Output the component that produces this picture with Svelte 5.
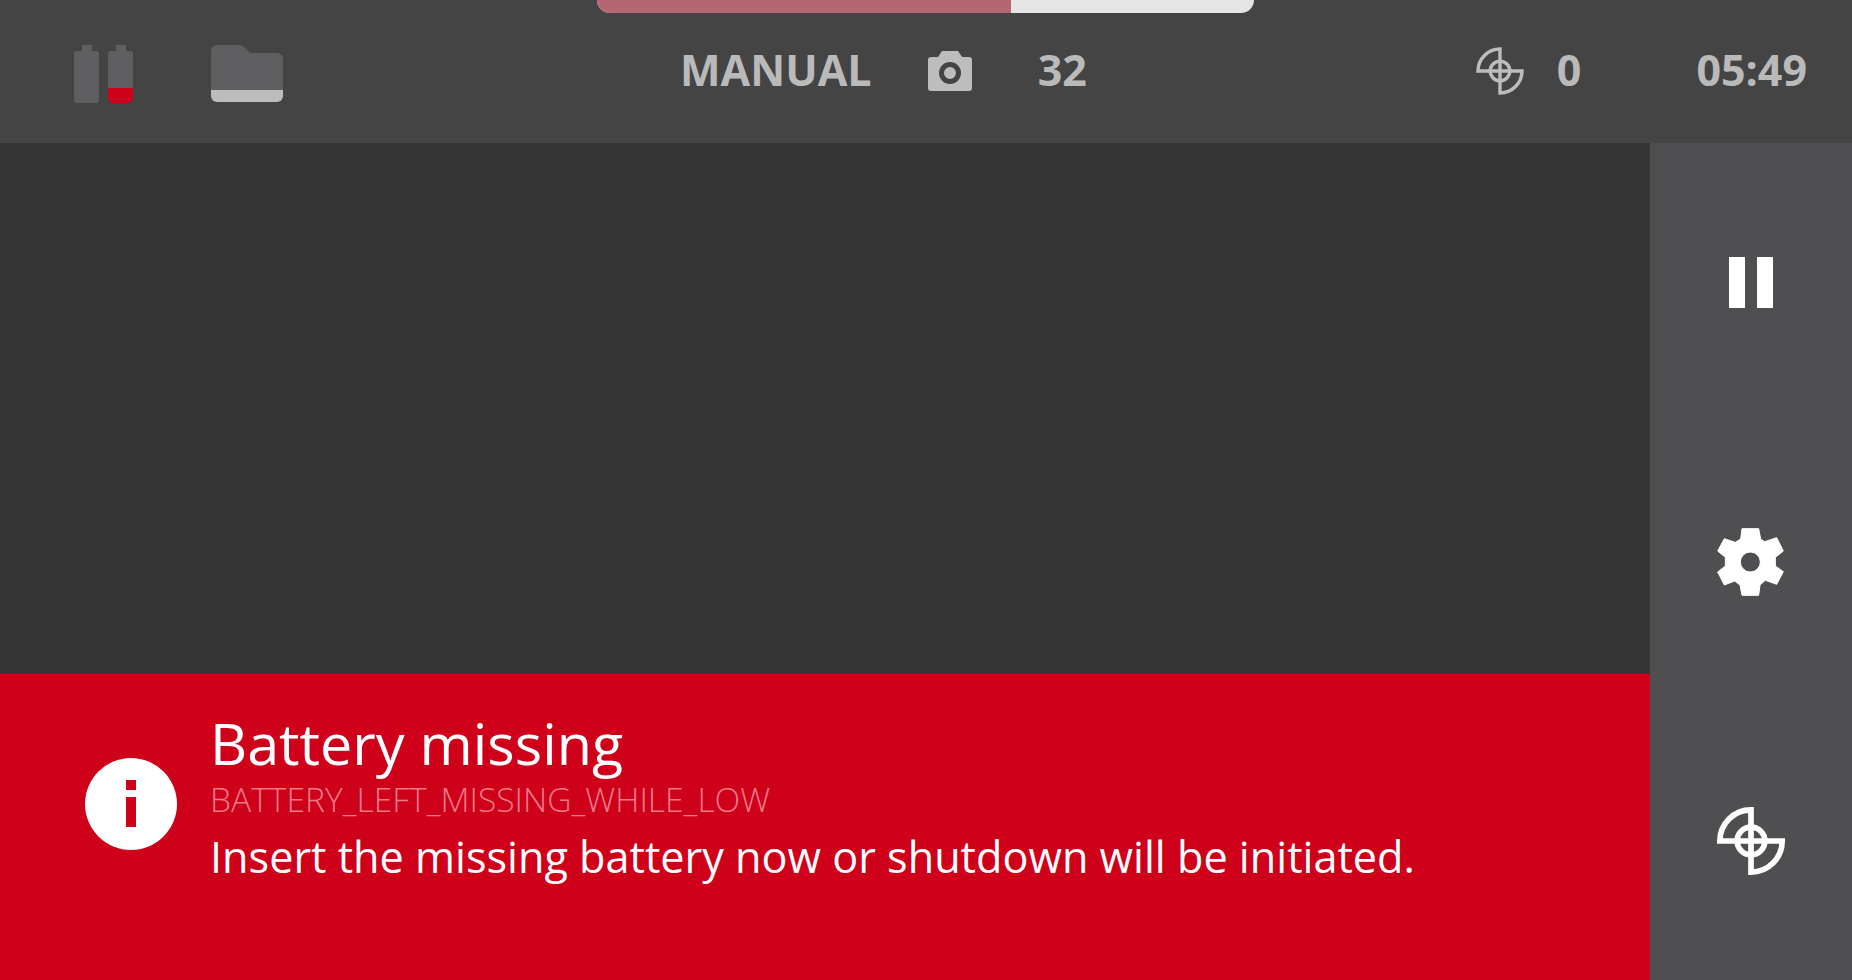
<script>
	let mode = "MANUAL";
	let shots = 32;
	let marks = 0;
	let time = "05:49";
	let progress = 63;
</script>

<div class="screen">
	<div class="progress">
		<div class="progress__fill" style="width: {progress}%"></div>
	</div>

	<header class="topbar">
		<div class="batteries">
			<svg width="25" height="58" viewBox="0 0 25 58">
				<path class="cell" d="M8 0h10v6h4a3 3 0 0 1 3 3v46a3 3 0 0 1-3 3H3a3 3 0 0 1-3-3V9a3 3 0 0 1 3-3h5z" />
			</svg>
			<svg width="25" height="58" viewBox="0 0 25 58">
				<path class="cell" d="M8 0h10v6h4a3 3 0 0 1 3 3v34H0V9a3 3 0 0 1 3-3h5z" />
				<path class="low" d="M0 43h25v10a5 5 0 0 1-5 5H5a5 5 0 0 1-5-5z" />
			</svg>
		</div>
		<svg class="folder" width="72" height="57" viewBox="0 0 72 57">
			<path class="cell" d="M6 0h22q3 0 5 2l5 5q1 1 3 1h25a6 6 0 0 1 6 6v31H0V6a6 6 0 0 1 6-6z" />
			<path class="strip" d="M0 45h72v6a6 6 0 0 1-6 6H6a6 6 0 0 1-6-6z" />
		</svg>
		<span class="mode">{mode}</span>
		<svg class="camera" width="44" height="40" viewBox="0 0 44 40">
			<path class="strip" fill-rule="evenodd" d="M14 0h16l4 6h7a3 3 0 0 1 3 3v28a3 3 0 0 1-3 3H3a3 3 0 0 1-3-3V9a3 3 0 0 1 3-3h7zM22 11a11 11 0 1 0 0 22a11 11 0 1 0 0-22zM22 16a6 6 0 1 1 0 12a6 6 0 1 1 0-12z" />
		</svg>
		<span class="count">{shots}</span>
		<svg class="target" width="48" height="48" viewBox="0 0 24 24">
			<path d="M1 12A11 11 0 0 1 12 1V23A11 11 0 0 0 23 12H1z" />
			<circle cx="12" cy="12" r="4.9" />
		</svg>
		<span class="marks">{marks}</span>
		<span class="time">{time}</span>
	</header>

	<div class="body">
		<main class="main">
			<div class="view"></div>
			<section class="alert">
				<svg class="info" width="92" height="92" viewBox="0 0 92 92">
					<circle cx="46" cy="46" r="46" fill="#fff" />
					<path d="M41 22h10v10H41zM41 39h10v30H41z" fill="#cf0019" />
				</svg>
				<div class="alert__text">
					<h1>Battery missing</h1>
					<div class="code">BATTERY_LEFT_MISSING_WHILE_LOW</div>
					<p>Insert the missing battery now or shutdown will be initiated.</p>
				</div>
			</section>
		</main>

		<aside class="side">
			<div class="side__cell">
				<svg width="44" height="51" viewBox="0 0 44 51">
					<path d="M0 0h16v51H0zM28 0h16v51H28z" fill="#fff" />
				</svg>
			</div>
			<div class="side__cell">
				<svg width="68" height="70" viewBox="53 53 204 204">
					<path fill="#fff" stroke="#fff" stroke-width="3" stroke-linejoin="round" fill-rule="evenodd" d="M128 55H178L184 86L196 94L232 82L252 122L228 141V167L252 184L232 222L198 210L182 224L178 255H128L122 224L106 212L75 224L55 185L78 167V141L55 122L75 85L108 96L124 86zM153 125a30 30 0 1 0 0 60a30 30 0 1 0 0-60z" />
				</svg>
			</div>
			<div class="side__cell">
				<svg class="target target--big" width="68" height="68" viewBox="0 0 24 24">
					<path d="M1 12A11 11 0 0 1 12 1V23A11 11 0 0 0 23 12H1z" />
					<circle cx="12" cy="12" r="4.9" />
				</svg>
			</div>
		</aside>
	</div>
</div>

<style>
	:global(body) {
		margin: 0;
	}

	.screen {
		position: relative;
		width: 1852px;
		height: 980px;
		overflow: hidden;
		display: flex;
		flex-direction: column;
		font-family: "Open Sans", "Liberation Sans", sans-serif;
		background: #353536;
	}

	.progress {
		position: absolute;
		top: 0;
		left: 597px;
		width: 657px;
		height: 13px;
		background: #e5e5e5;
		border-radius: 0 0 13px 13px;
		overflow: hidden;
	}

	.progress__fill {
		height: 100%;
		background: #b56673;
	}

	.topbar {
		height: 143px;
		flex: none;
		display: flex;
		align-items: center;
		padding-left: 74px;
		background: #444444;
		color: #bababa;
		font-weight: 700;
		font-size: 43px;
		line-height: 1;
	}

	.topbar span {
		margin-bottom: 4px;
	}

	.batteries {
		display: flex;
		gap: 9px;
		margin-top: 4px;
	}

	.cell {
		fill: #5f5e60;
	}

	.low {
		fill: #cf0019;
	}

	.strip {
		fill: #bdbdbd;
	}

	.folder {
		margin-left: 78px;
		margin-top: 4px;
	}

	.mode {
		margin-left: 397px;
	}

	.camera {
		margin-left: 56px;
		margin-bottom: 1px;
	}

	.count {
		margin-left: 66px;
	}

	.target {
		margin-left: 389px;
		margin-bottom: 1px;
		fill: none;
		stroke: #bdbdbd;
		stroke-width: 1.7;
	}

	.target--big {
		margin: 0;
		stroke: #fff;
		stroke-width: 2;
	}

	.marks {
		margin-left: 33px;
	}

	.time {
		margin-left: 115px;
	}

	.body {
		flex: 1;
		display: flex;
		min-height: 0;
	}

	.main {
		flex: 1;
		display: flex;
		flex-direction: column;
	}

	.view {
		flex: 1;
	}

	.alert {
		height: 306px;
		display: flex;
		align-items: flex-start;
		padding: 33px 0 0 85px;
		box-sizing: border-box;
		gap: 33px;
		background: #cf0019;
		color: #fff;
	}

	.info {
		margin-top: 51px;
	}

	h1 {
		margin: 0;
		font-size: 57.5px;
		font-weight: 400;
		line-height: 72px;
	}

	.code {
		font-size: 33.6px;
		font-weight: 340;
		line-height: 40px;
		color: #ee7a8a;
	}

	p {
		margin: 8px 0 0;
		font-size: 43.2px;
		line-height: 60px;
	}

	.side {
		width: 202px;
		flex: none;
		background: #4f4f51;
		display: grid;
		grid-template-rows: repeat(3, 1fr);
	}

	.side__cell {
		display: flex;
		align-items: center;
		justify-content: center;
	}
</style>
